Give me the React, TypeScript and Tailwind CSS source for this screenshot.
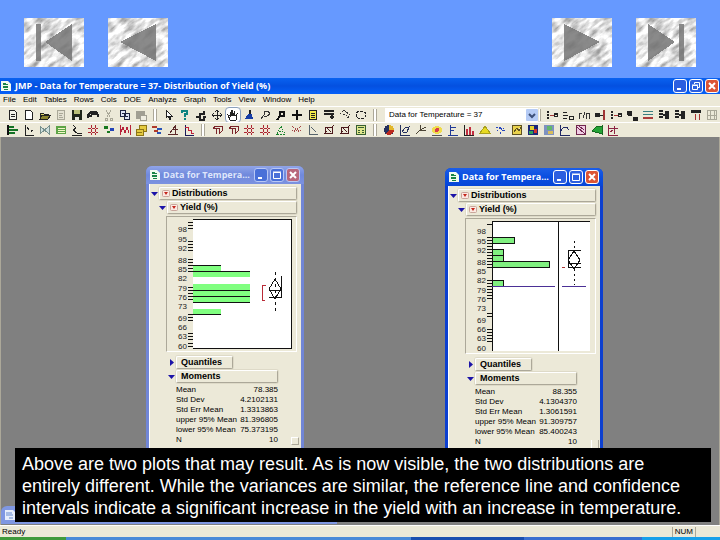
import type { ReactNode } from "react";

type Point = [number, number];

type IconName = keyof typeof icons;

// small 12x12 toolbar drawings
const icons = {
  doc: <path d="M2.5 1.5h5l2 2v7h-7zM4 5h4M4 7h4" fill="#f4f4ea" stroke="#222" />,
  blank: <path d="M2.5 1.5h5l2 2v7h-7z" fill="#fff" stroke="#222" />,
  open: (
    <>
      <path d="M1 10V4h3l1 1h4v2" fill="#ded76a" stroke="#222" />
      <path d="M1 10l2-4h9l-3 4z" fill="#8a8430" stroke="#222" />
    </>
  ),
  faded: <path d="M2.5 1.5h7v9h-7zM4 4h4M4 6h3M4 8h4" fill="#e4e1d2" stroke="#aaa898" />,
  save: (
    <>
      <path d="M1 1h10v10H1z" fill="#20261a" />
      <path d="M3 1h6v4H3z" fill="#b9bf78" />
      <path d="M4 8h4v3H4z" fill="#e6e6dc" />
    </>
  ),
  print: <path d="M1 9V6l3-3h5l2 3v2M4 5l5 0M2 7h3" fill="none" stroke="#222" strokeWidth="2" />,
  cut: <path d="M3 1l4 7M8 1L4 8M2 9h2v2H2zM7 9h2v2H7z" fill="none" stroke="#aaa898" />,
  copy: <path d="M1.5 1.5h5v6h-5zM5.5 4.5h5v6h-5zM3 4h2M7 7h2" fill="#dfe4f6" stroke="#1d2340" />,
  paste: (
    <>
      <path d="M1 2h9v8H1z" fill="#a09e92" />
      <path d="M5 6h6v5H5z" fill="#eeece0" stroke="#a09e92" />
    </>
  ),
  arrow: <path d="M3 1v8l2-2 2 4 1-1-2-3h3z" fill="#fff" stroke="#222" />,
  help: <path d="M3 4V2h5v3H6v3M6 9v2" fill="none" stroke="#0e8480" strokeWidth="2" />,
  move: <path d="M1 8h4V5h4V2M5 8v3h4V8h2" fill="none" stroke="#222" strokeWidth="2" />,
  cross: <path d="M6 1v10M1 6h10M4 3l2-2 2 2M4 9l2 2 2-2M3 4L1 6l2 2M9 4l2 2-2 2" fill="none" stroke="#222" />,
  hand: <path d="M3 11L1 6l2 1V3l1 4V1l1 6V1l2 6V2l1 5 2-2-1 6z" fill="#fff" stroke="#222" />,
  brush: (
    <>
      <path d="M7 1v5" stroke="#222" strokeWidth="2" />
      <path d="M2 10l3-5h4l1 5z" fill="#173ea6" />
    </>
  ),
  lasso: <path d="M2 10l3-4V2h4l2 3-3 2H5" fill="none" stroke="#333" />,
  zoomer: <path d="M2 11l3-4V3h4v4H5" fill="none" stroke="#111" strokeWidth="2" />,
  plus: <path d="M6 1v10M1 6h10" stroke="#111" strokeWidth="2" />,
  note: <path d="M2.5 1.5h7v9h-7zM4 4h4M4 6h4M4 8h4" fill="#f3ec4a" stroke="#222" />,
  lines: <path d="M1 2h10M1 5h10M7 8h4M9 5v5" fill="none" stroke="#222" strokeWidth="2" />,
  poly: <path d="M1 5l4-4 6 5-3 4M4 5l4 2" fill="none" stroke="#333" strokeDasharray="2 1" />,
  oval: <ellipse cx="6" cy="6" rx="5" ry="4" fill="none" stroke="#222" strokeDasharray="3 1" />,
  bars: (
    <>
      <path d="M1 1v10" stroke="#111" strokeWidth="2" />
      <path d="M2 2h5v2H2zM2 5h9v2H2zM2 8h6v2H2z" fill="#147224" />
    </>
  ),
  axes: <path d="M2 1v10h9M4 3l2 3M8 8V6h2" fill="none" stroke="#222" />,
  bow: <path d="M1 2l9 8V2L1 10z" fill="#cfe0dd" stroke="#77908d" />,
  list: (
    <>
      <path d="M1 2h10v8H1z" fill="#5da446" />
      <path d="M3 4h7M3 6h7M3 8h7" stroke="#f3f6c8" />
    </>
  ),
  fit: <path d="M2 1l3 3-3 2 4 3h5M1 11h10" fill="none" stroke="#222" />,
  redgrid: <path d="M1 4h10M1 8h10M4 1v10M8 1v10" fill="none" stroke="#ad2732" strokeDasharray="3 1" />,
  dots: (
    <>
      <path d="M1 2h4v3H1zM4 7h3v2H4z" fill="#17781f" />
      <path d="M7 4h4v3H7z" fill="#2344b8" />
    </>
  ),
  wave: <path d="M1 1v10M2 8l2-5 2 6 2-6 2 6M11 1v10" fill="none" stroke="#b72239" />,
  gold: <path d="M4 1h7v6H8v4H1V5h3zM4 5h4v3M1 8h6" fill="#e4ca40" stroke="#8d7516" />,
  flow: (
    <>
      <path d="M1 2h5v2H1zM3 6h4v2H3z" fill="#b13a2a" />
      <path d="M6 4h5v2H6zM6 8h4v2H6z" fill="#2954b6" />
    </>
  ),
  slope: <path d="M1 10h10M3 9l5-7M6 5h5M8 1v9" fill="none" stroke="#5c2a2a" />,
  surv: (
    <>
      <path d="M2 1v10h9" fill="none" stroke="#1a1a5a" />
      <path d="M2 3h3v3h3v3h3" fill="none" stroke="#bf2239" />
    </>
  ),
  box3: <path d="M2 4l3-2h6v5l-3 3M2 4h6v6M5 4v6" fill="none" stroke="#7b2429" />,
  tri: <path d="M2 10l4-8 4 8zM4 7h4" fill="none" stroke="#16832b" strokeDasharray="2 1" />,
  net: <path d="M1 2l9 8M10 2L1 10M1 6h10" fill="none" stroke="#a34545" strokeDasharray="1 1" />,
  hook: <path d="M2 1v9h9M4 3l5 5" fill="none" stroke="#56646c" />,
  cube: <path d="M2 3h7v6H2zM1 10l3-3M8 4l3-3M4 4l4 4" fill="none" stroke="#4b191c" />,
  calc: (
    <>
      <path d="M1.5 1.5h9v9h-9z" fill="#dfe68d" stroke="#375f31" />
      <path d="M3 3h6M3 6h2M7 6h2M3 8h2M7 8h2" stroke="#375f31" />
    </>
  ),
  pie: (
    <>
      <circle cx="6" cy="6" r="5" fill="#26315e" />
      <path d="M6 6V1a5 5 0 0 1 5 5z" fill="#e3b72b" />
      <path d="M6 6h5a5 5 0 0 1-8 4z" fill="#bb2b20" />
    </>
  ),
  loop: <path d="M1 1v10h10M3 8l3-4 4-1-2 5-4 1" fill="none" stroke="#25305e" />,
  spark: <path d="M1 10l4-4 6-3M5 1v5M5 6h6" fill="none" stroke="#4b4435" />,
  target: (
    <>
      <ellipse cx="6" cy="6" rx="5" ry="4" fill="#f0dc4c" />
      <circle cx="6" cy="6" r="2" fill="#d83b4a" />
      <path d="M1 11h10" stroke="#555" />
    </>
  ),
  flag: <path d="M3 1v10M3 3h6M3 6h4M1 11h10" fill="none" stroke="#223b96" />,
  hist: (
    <>
      <path d="M1 1v10h10" fill="none" stroke="#222" />
      <path d="M3 5h2v6H3zM6 3h2v8H6zM9 7h2v4H9z" fill="#c22e40" />
    </>
  ),
  peak: <path d="M1 9l5-7 5 7z" fill="#e7da20" stroke="#aaa11c" />,
  swarm: <path d="M1 3h4l2 3h4M2 7l4-3M5 10l4-6" fill="none" stroke="#2746bd" strokeDasharray="2 1" />,
  yellow: <path d="M1.5 1.5h9v9h-9zM3 8l3-4 2 3 2-4" fill="#e9d24c" stroke="#5e5120" />,
  tree: (
    <>
      <path d="M1 1h10v10H1z" fill="#1c2878" />
      <path d="M3 2h4v4H3z" fill="#e4d232" />
      <path d="M7 5h3v4H7z" fill="#d0322c" />
      <path d="M2 7h4v3H2z" fill="#2da05b" />
    </>
  ),
  cell: (
    <>
      <path d="M1 1h10v10H1z" fill="#7f92c0" />
      <path d="M4 2h5v4H4z" fill="#62b76c" />
      <path d="M5 7h5v3H5z" fill="#d7bd5b" />
    </>
  ),
  curve: <path d="M1 1v10h10M2 7c2-5 6-5 8-1" fill="none" stroke="#222a66" />,
  pink: <path d="M1.5 1.5h9v9h-9zM2 3l8 7M4 2l5 4" fill="#f0cde3" stroke="#71274f" />,
  leaf: <path d="M1 7l4-4 6-1v8z" fill="#25a336" stroke="#146a20" />,
  ctrl: <path d="M1 1v10h10M2 4h9M7 2v8M3 8l3-2" fill="none" stroke="#8b2342" />,
  joinA: (
    <>
      <path d="M1 2h2v2H1zM1 5h2v2H1zM1 8h2v2H1zM8 4h4v4H8z" fill="#222" />
      <path d="M4 6h4" stroke="#a03434" />
      <path d="M9 6h2" stroke="#ece9d8" />
    </>
  ),
  joinB: <path d="M1 3h4M1 6h5M1 9h4M7 7h4v3H7z" fill="none" stroke="#222" />,
  joinC: <path d="M1 10V4h3M5 9l2-6M8 10V4h3v6" fill="none" stroke="#333" />,
  joinD: (
    <>
      <path d="M1 4h5v4H1z" fill="#222" />
      <path d="M6 6h3" stroke="#222" />
      <path d="M9 1h2v10H9z" fill="#a03434" />
    </>
  ),
  stackA: <path d="M1 2h4v3H1zM2 6h4M7 8h4v3H7z" fill="#222" stroke="#222" />,
  stackB: (
    <>
      <path d="M1 2h10M1 5h10" stroke="#3a7d80" />
      <path d="M1 9h10" stroke="#aa3c3c" strokeWidth="2" />
    </>
  ),
  split: <path d="M1 2h4M1 5h4M1 8h4M5 6h3M8 2v8M10 2v8" fill="none" stroke="#222" strokeWidth="2" />,
  table: (
    <>
      <path d="M1 2h10" stroke="#222" strokeWidth="3" />
      <path d="M5 5v6M9 5v6" stroke="#a33" />
    </>
  ),
  ghost: <path d="M1.5 1.5h9v9h-9zM4 1v10M8 1v10M1 6h10" fill="none" stroke="#aaa898" />,
};

const fileTools: IconName[] = ["doc", "blank", "open", "faded", "save", "print", "cut", "copy", "paste"];
const pointerTools: IconName[] = [
  "arrow", "help", "move", "cross", "hand", "brush", "lasso", "zoomer", "plus", "note", "lines", "poly", "oval",
];
const tableTools: IconName[] = [
  "joinA", "joinB", "joinC", "joinD", "joinA", "stackA", "stackB", "split", "split", "table", "ghost",
];
const analyzeTools: IconName[] = [
  "bars", "axes", "bow", "list", "fit", "redgrid", "dots", "wave", "gold", "flow", "slope", "surv",
];
const doeTools: IconName[] = ["box3", "box3", "redgrid", "redgrid", "tri", "net", "hook", "cube", "cube", "calc"];
const graphTools: IconName[] = [
  "pie", "loop", "spark", "target", "flag", "hist", "peak", "swarm", "yellow", "tree", "cell", "curve", "pink", "leaf", "ctrl",
];

const menus = ["File", "Edit", "Tables", "Rows", "Cols", "DOE", "Analyze", "Graph", "Tools", "View", "Window", "Help"];

const axisLabels = [98, 95, 92, 88, 85, 82, 79, 76, 73, 69, 66, 63, 60];
const labelOffsets = [12, 22, 31, 43, 52, 61, 71, 80, 89, 101, 110, 119, 129];

function ToolGroup({ names, active }: { names: IconName[]; active?: IconName }) {
  return (
    <div className="flex shrink-0 items-center">
      {names.map((name, index) => (
        <button
          key={`${name}-${index}`}
          type="button"
          aria-label={name}
          className={`flex h-4 w-4 items-center justify-center ${
            name === active ? "rounded-sm border border-[#8ba0bd] bg-white" : ""
          }`}
        >
          <svg viewBox="0 0 12 12" className="h-3 w-3 shrink-0" shapeRendering="crispEdges">
            {icons[name]}
          </svg>
        </button>
      ))}
    </div>
  );
}

function Grip() {
  return <span className="mx-1 h-3 w-1 shrink-0 border-x border-x-[#aca899] bg-white" />;
}

// first / previous / next / last buttons on top of the slide
function SlideButton({ label, bar, triangle }: { label: string; bar?: number; triangle: string }) {
  return (
    <button type="button" aria-label={label} className="h-[49px] w-[60px]">
      <svg viewBox="0 0 60 49" className="h-full w-full">
        <rect width="60" height="49" fill="#e8e8e8" />
        <rect x="-20" y="-25" width="100" height="100" transform="rotate(-38 30 24)" filter="url(#marble)" />
        <g fill="#777" fillOpacity="0.86" shapeRendering="crispEdges">
          {bar !== undefined && <rect x={bar} y="6" width="5" height="37" />}
          <polygon points={triangle} />
        </g>
      </svg>
    </button>
  );
}

function WindowButtons({ faded, small }: { faded?: boolean; small?: boolean }) {
  const blue = faded ? "bg-[#4a70d8]" : "bg-[#2c5fe0]";
  const red = faded ? "bg-[#b8677c]" : "bg-[#dc5434]";
  const box = `flex h-[14px] w-[14px] items-center justify-center rounded-[3px] border ${
    faded ? "border-[#b9c8f5]" : "border-white"
  }`;

  return (
    <div className="flex shrink-0 gap-[2px]">
      <button type="button" aria-label="Minimize" className={`${box} ${blue}`}>
        <svg viewBox="0 0 10 10" className="h-[10px] w-[10px]">
          <path d="M2 8h4" stroke="#fff" strokeWidth="2" />
        </svg>
      </button>
      <button type="button" aria-label="Maximize" className={`${box} ${blue}`}>
        <svg viewBox="0 0 10 10" className="h-[10px] w-[10px]" fill="none" stroke="#fff">
          {small ? <path d="M3.5 3V1.5h5v5H7M1.5 4.500h5v4h-5zM1 4h6" /> : <path d="M1.500 2.500h7v6h-7zM1 2h8" />}
        </svg>
      </button>
      <button type="button" aria-label="Close" className={`${box} ${red}`}>
        <svg viewBox="0 0 10 10" className="h-[10px] w-[10px]">
          <path d="M2 2l6 6M8 2L2 8" stroke="#fff" strokeWidth="2" />
        </svg>
      </button>
    </div>
  );
}

function JmpIcon() {
  return (
    <svg viewBox="0 0 10 10" className="h-[10px] w-[10px] shrink-0">
      <path d="M0 0h7l3 3v7H0z" fill="#f1fbef" />
      <path d="M2 2h3v2H2zM2 5h5v2H2zM5 3h2v1H5zM3 8h4v1H3z" fill="#178345" />
    </svg>
  );
}

function Disclosure({ open = true }: { open?: boolean }) {
  return (
    <svg viewBox="0 0 8 8" className="h-2 w-2 shrink-0">
      <path d={open ? "M0 2h7L3.500 6z" : "M2 0v7l4-3.500z"} fill="#1c14a8" />
    </svg>
  );
}

function OutlineRow({ title, open, menu, className = "" }: {
  title: string;
  open?: boolean;
  menu?: boolean;
  className?: string;
}) {
  return (
    <div className={`flex items-center ${className}`}>
      <Disclosure open={open} />
      <h3 className="flex h-[13px] flex-1 items-center gap-[2px] rounded-[2px] border border-t-white border-l-white border-r-[#aca899] border-b-[#aca899] pl-[2px] text-[9px] leading-[11px] font-bold shadow-[0_0_0_1px_#dedac8]">
        {menu && (
          <svg viewBox="0 0 8 8" className="h-2 w-2 shrink-0">
            <rect x="0.500" y="0.500" width="7" height="6" rx="1" fill="#fbe9e2" stroke="#c9a59b" />
            <path d="M2 2h4L4 5z" fill="#c4261b" />
          </svg>
        )}
        <span className={menu ? "" : "pl-[2px]"}>{title}</span>
      </h3>
    </div>
  );
}

function AxisScale({ ticks }: { ticks: number[] }) {
  return (
    <>
      {axisLabels.map((label, index) => (
        <text key={label} x="20" y={labelOffsets[index] + 3} fontSize="8" textAnchor="end" fill="#222">
          {label}
        </text>
      ))}
      <path d={ticks.map((y) => `M21 ${y}.5h5`).join("")} stroke="#111" />
    </>
  );
}

function Diamond({ center: [x, y], half }: { center: Point; half: number }) {
  return (
    <path d={`M${x} ${y - half}L${x + 6} ${y}L${x} ${y + half}L${x - 6} ${y}z`} fill="none" stroke="#111" />
  );
}

function LeftPlot() {
  return (
    <svg viewBox="0 0 128 134" className="block h-[134px] w-[128px]" shapeRendering="crispEdges">
      <rect x="26" y="2" width="98" height="129" fill="#fff" />
      <path d="M26 2.500h98.500v129H26" fill="none" stroke="#111" />
      <g fill="#80ff80">
        <rect x="26" y="48" width="28" height="6" />
        <rect x="26" y="54" width="57" height="6" />
        <rect x="26" y="67" width="57" height="18" />
        <rect x="26" y="92" width="28" height="5" />
      </g>
      <path d="M21 48.500h33M21 54.500h62M26 73.500h57M26 79.500h57M26 85.500h57M21 97.500h33" stroke="#111" />
      <AxisScale ticks={[5, 8, 11, 24, 27, 30, 33, 42, 45, 51, 70, 73, 76, 79, 82, 100, 103, 116, 119, 122, 126, 129]} />
      <path d="M99 68.500h-3.500v15H98" fill="none" stroke="#b92a36" />
      <path d="M108.500 55v41" stroke="#111" strokeDasharray="3 3" />
      <path d="M114.500 59v21H102M102 73.500h13" fill="none" stroke="#111" />
      <Diamond center={[108, 72]} half={10} />
    </svg>
  );
}

function RightPlot() {
  return (
    <svg viewBox="0 0 128 134" className="block h-[134px] w-[128px]" shapeRendering="crispEdges">
      <rect x="26" y="2" width="98" height="130" fill="#fff" />
      <path d="M26 2.500h98M26.500 2v130M92.500 2v130" stroke="#111" />
      <g fill="#80f080" stroke="#111">
        <rect x="26.500" y="18.500" width="22" height="6" />
        <rect x="26.500" y="30.500" width="11" height="6" />
        <rect x="26.500" y="36.500" width="11" height="6" />
        <rect x="26.500" y="42.500" width="57" height="6" />
        <rect x="26.500" y="61.500" width="11" height="6" />
      </g>
      <path d="M26 67.500h63M96 67.500h24" stroke="#4b3096" />
      <AxisScale ticks={[5, 18, 21, 24, 27, 30, 33, 36, 39, 42, 45, 48, 61, 64, 67, 70, 73, 76, 79, 94, 97, 110, 113, 116, 119, 122]} />
      <path d="M96 48.500h3" stroke="#a33" />
      <path d="M108.500 22v10M108.500 50v16" stroke="#111" strokeDasharray="2 3" />
      <path d="M115 31.500h-12.500v17H115M102 44.500h13" fill="none" stroke="#111" />
      <Diamond center={[108, 41]} half={9} />
    </svg>
  );
}

type ReportProps = {
  className: string;
  active?: boolean;
  plot: ReactNode;
  moments: [string, string][];
};

function ReportWindow({ className, active, plot, moments }: ReportProps) {
  return (
    <section
      className={`absolute flex flex-col rounded-t-md px-[3px] ${
        active ? "bg-[#0c3fd0]" : "bg-[#7186d6]"
      } ${className}`}
    >
      <header
        className={`-mx-[3px] flex h-[18px] items-center gap-[3px] rounded-t-md pr-[4px] pl-[4px] ${
          active
            ? "bg-linear-to-b from-[#1b5ee8] via-[#0a4ee0] to-[#0645d8] text-white"
            : "bg-linear-to-b from-[#90a4e8] via-[#7089dc] to-[#7c92e0] text-[#dfe6fb]"
        }`}
      >
        <JmpIcon />
        <h2 className="flex-1 font-['Open_Sans',sans-serif] text-[9px] leading-3 font-bold whitespace-nowrap">
          Data for Tempera...
        </h2>
        <WindowButtons faded={!active} />
      </header>

      <div className="relative flex-1 border-l border-white bg-[#ece9d8] pt-[3px] pr-[4px]">
        <OutlineRow title="Distributions" menu className="mb-[1px] pl-[1px]" />
        <OutlineRow title="Yield (%)" menu className="pl-[9px]" />
        <div className="mt-[2px] ml-4 border border-t-[#aca899] border-l-[#aca899] border-r-white border-b-white">
          {plot}
        </div>
        <div className="mt-1 pl-[18px]">
          <OutlineRow title="Quantiles" open={false} className="w-[65px]" />
          <OutlineRow title="Moments" className="mt-[1px] w-[110px]" />
          <table className="mt-[2px] ml-2 w-[102px] text-[8px] leading-[10px] whitespace-nowrap">
            <tbody>
              {moments.map(([label, value]) => (
                <tr key={label}>
                  <th scope="row" className="text-left font-normal">{label}</th>
                  <td className="text-right">{value}</td>
                </tr>
              ))}
            </tbody>
          </table>
        </div>
      </div>
    </section>
  );
}

export default function App() {
  return (
    <div className="flex min-h-screen flex-col overflow-hidden bg-[#6699ff] font-['Liberation_Sans',sans-serif] text-black">
      <svg className="absolute h-0 w-0" aria-hidden="true">
        <filter id="marble" x="0" y="0" width="100%" height="100%" colorInterpolationFilters="sRGB">
          <feTurbulence type="fractalNoise" baseFrequency="0.07 0.18" numOctaves="4" seed="8" />
          <feColorMatrix values="0.9 0 0 0 0.44  0.9 0 0 0 0.44  0.9 0 0 0 0.44  0 0 0 0 1" />
        </filter>
      </svg>

      <nav aria-label="Slides" className="flex h-[78px] justify-between px-6 pt-[18px]">
        <div className="flex gap-6">
          <SlideButton label="First slide" bar={12} triangle="48,6 48,43 21,24" />
          <SlideButton label="Previous slide" triangle="48,6 48,43 12,24" />
        </div>
        <div className="flex gap-6">
          <SlideButton label="Next slide" triangle="12,6 12,43 48,24" />
          <SlideButton label="Last slide" bar={43} triangle="12,6 12,43 39,24" />
        </div>
      </nav>

      <div className="relative flex flex-1 flex-col">
        <header className="flex h-4 items-center gap-[4px] bg-linear-to-b from-[#0a62f0] via-[#0450e0] to-[#0560f8] pr-[1px] pl-[1px]">
          <JmpIcon />
          <h1 className="flex-1 font-['Open_Sans',sans-serif] text-[9px] leading-3 font-bold whitespace-nowrap text-white">
            JMP - Data for Temperature = 37- Distribution of Yield (%)
          </h1>
          <WindowButtons small />
        </header>

        <nav aria-label="Menu" className="flex h-3 items-center gap-[7px] bg-[#ece9d8] pl-[3px] text-[8px] leading-3">
          {menus.map((menu) => (
            <button key={menu} type="button">{menu}</button>
          ))}
        </nav>

        <div className="flex h-4 items-center overflow-hidden border-t border-white bg-[#ece9d8] pl-[5px]">
          <ToolGroup names={fileTools} />
          <Grip />
          <ToolGroup names={pointerTools} active="hand" />
          <Grip />
          <div className="relative ml-1 flex h-[14px] w-[153px] shrink-0 items-center bg-white">
            <select
              aria-label="Active data table"
              className="h-full w-full appearance-none bg-transparent pl-1 text-[8px] leading-[14px]"
            >
              <option>Data for Temperature = 37</option>
            </select>
            <svg viewBox="0 0 12 12" className="pointer-events-none absolute right-0 h-3 w-3">
              <rect width="12" height="12" rx="1" fill="#b5cbf5" />
              <path d="M3 5l3 3 3-3" fill="none" stroke="#3c4f78" strokeWidth="2" />
            </svg>
          </div>
          <span className="mr-[3px] ml-[1px] h-3 w-[2px] shrink-0 border-r border-r-[#aca899] bg-white" />
          <ToolGroup names={tableTools} />
        </div>

        <div className="flex h-[15px] items-center border-t border-white bg-[#ece9d8] pl-[5px]">
          <ToolGroup names={analyzeTools} />
          <Grip />
          <ToolGroup names={doeTools} />
          <Grip />
          <ToolGroup names={graphTools} />
        </div>

        <main className="relative min-h-[388px] flex-1 overflow-hidden border-x border-[#aca899] bg-[#808080]">
          <ReportWindow
            className="top-[29px] left-[145px] h-[340px] w-[158px]"
            plot={<LeftPlot />}
            moments={[
              ["Mean", "78.385"],
              ["Std Dev", "4.2102131"],
              ["Std Err Mean", "1.3313863"],
              ["upper 95% Mean", "81.396805"],
              ["lower 95% Mean", "75.373195"],
              ["N", "10"],
            ]}
          />
          <ReportWindow
            active
            className="top-[31px] left-[444px] h-[340px] w-[158px]"
            plot={<RightPlot />}
            moments={[
              ["Mean", "88.355"],
              ["Std Dev", "4.1304370"],
              ["Std Err Mean", "1.3061591"],
              ["upper 95% Mean", "91.309757"],
              ["lower 95% Mean", "85.400243"],
              ["N", "10"],
            ]}
          />
          {/* scroll corners of the two reports */}
          <span className="absolute top-[300px] left-[290px] h-2 w-2 border border-t-white border-l-white border-r-[#aca899] border-b-[#aca899]" />
          <span className="absolute top-[303px] left-[590px] h-2 w-2 border-x border-l-white border-r-[#aca899]" />
          <div className="absolute bottom-[1px] left-0 h-[18px] w-[336px] rounded-t-md bg-[#7f97e2] p-1">
            <svg viewBox="0 0 10 10" className="h-[10px] w-[10px]">
              <path d="M0 0h8l2 2v8H0z" fill="#e6edfb" />
              <path d="M1 3h6M1 5h7M4 8h4" stroke="#6489cf" />
            </svg>
          </div>
          <p className="absolute right-2 bottom-[3px] left-[14px] bg-black px-[7px] pt-[5px] pb-[3px] text-[18px] leading-[22px] whitespace-nowrap text-white">
            Above are two plots that may result. As is now visible, the two distributions are
            <br />
            entirely different. While the variances are similar, the reference line and confidence
            <br />
            intervals indicate a significant increase in the yield with an increase in temperature.
          </p>
        </main>

        <footer className="flex h-3 items-center justify-between border-t border-white bg-[#ece9d8] pr-6 pl-[2px] text-[8px] leading-[10px]">
          <span>Ready</span>
          <span className="border-x border-[#aca899] px-[2px]">NUM</span>
        </footer>
        <div className="flex h-[3px] bg-[#4a8ad8]">
          <span className="w-[66px] bg-[#3f9a3c]" />
          <span className="flex-1" />
          <span className="w-[113px] bg-[#1a4fb0]" />
          <span className="w-[118px] bg-[#3a6fd0]" />
          <span className="w-[78px] bg-[#18a0ea]" />
        </div>
      </div>
    </div>
  );
}
